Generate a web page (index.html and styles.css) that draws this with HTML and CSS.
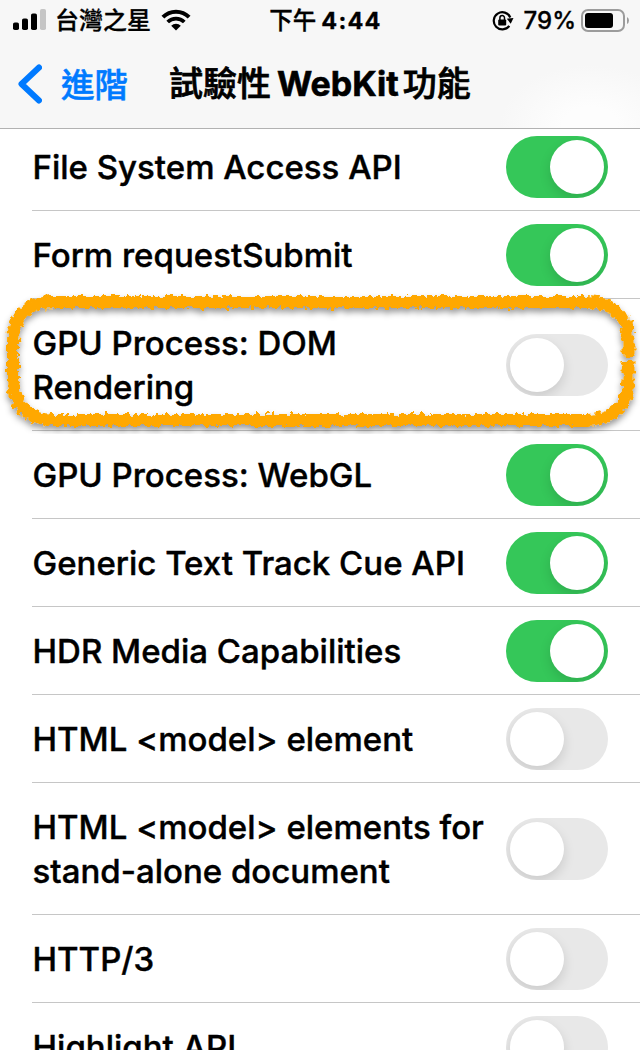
FILE: index.html
```html
<!DOCTYPE html>
<html lang="zh-Hant">
<head>
    <meta charset="UTF-8">
    <meta name="viewport" content="width=device-width, initial-scale=1.0">
    <title>試驗性 WebKit 功能</title>
    <link rel="stylesheet" href="styles.css">
</head>
<body>
    <header class="header">
        <div class="status-bar">
            <div class="status-left">
                <svg class="signal" width="34" height="22" viewBox="0 0 34 22">
                    <rect x="0" y="13.5" width="6" height="7.5" rx="1.8"/>
                    <rect x="9" y="9.5" width="6" height="11.5" rx="1.8"/>
                    <rect x="18" y="4.5" width="6" height="16.5" rx="1.8"/>
                    <rect x="27" y="0" width="6" height="21" rx="1.8" fill="#c5c5c5"/>
                </svg>
                <span class="carrier">台灣之星</span>
                <svg class="wifi" width="30" height="22" viewBox="0 0 30 22">
                    <path d="M1.9 8.2 A18.5 18.5 0 0 1 28.1 8.2" fill="none" stroke="#000" stroke-width="4"/>
                    <path d="M6.7 13 A11.7 11.7 0 0 1 23.3 13" fill="none" stroke="#000" stroke-width="3.7"/>
                    <path d="M15 21.5 L10.2 16.7 A6.9 6.9 0 0 1 19.8 16.7 Z"/>
                </svg>
            </div>
            <div class="time"><span class="ampm">下午</span><b>4:44</b></div>
            <div class="status-right">
                <svg class="lock" width="22" height="22" viewBox="0 0 22 22">
                    <path d="M17.3 15.9 A8.6 8.6 0 1 1 18.3 7.5" fill="none" stroke="#000" stroke-width="2.2"/>
                    <path d="M14.8 8.7 L21.5 7.9 L18.7 13.7 Z"/>
                    <rect x="6.2" y="9.6" width="8" height="5.9" rx="1"/>
                    <path d="M7.9 10 V7.9 A2.3 2.3 0 0 1 12.5 7.9 V10" fill="none" stroke="#000" stroke-width="1.5"/>
                </svg>
                <span class="percent">79%</span>
                <svg class="battery" width="49" height="24" viewBox="0 0 49 24">
                    <rect x="1" y="1" width="42" height="21" rx="6" fill="none" stroke="#9c9c9c" stroke-width="2"/>
                    <rect x="4" y="4" width="28" height="15" rx="3"/>
                    <path d="M46 8 Q48 9.2 48 11.5 Q48 13.8 46 15 Z" fill="#9c9c9c"/>
                </svg>
            </div>
        </div>
        <div class="nav-bar">
            <a class="back">
                <svg width="24" height="40" viewBox="0 0 24 40">
                    <path d="M21 3.5 L3.5 20 L21 36.5" fill="none" stroke="#007aff" stroke-width="6" stroke-linecap="round" stroke-linejoin="round"/>
                </svg>
                <span>進階</span>
            </a>
            <h1>試驗性<span class="latin">WebKit</span>功能</h1>
        </div>
    </header>

    <main class="list">
        <div class="row"><span class="label">File System Access API</span><span class="switch on"></span></div>
        <div class="row"><span class="label">Form requestSubmit</span><span class="switch on"></span></div>
        <div class="row marked">
            <span class="label">GPU Process: DOM<br>Rendering</span><span class="switch"></span>
            <!-- crayon outline -->
            <svg class="marker" width="640" height="150" viewBox="0 0 640 150">
                <defs>
                    <filter id="crayon" x="0" y="0" width="640" height="150" filterUnits="userSpaceOnUse">
                        <feTurbulence type="fractalNoise" baseFrequency="0.2" numOctaves="2" seed="7" result="noise"/>
                        <feDisplacementMap in="SourceGraphic" in2="noise" scale="9" xChannelSelector="R" yChannelSelector="G" result="rough"/>
                        <feDropShadow in="rough" dx="0" dy="4" stdDeviation="3" flood-color="#000" flood-opacity="0.4"/>
                    </filter>
                </defs>
                <path filter="url(#crayon)" d="M628.5 73 V55 Q626 19 588 18 H52 Q14 19 13 57 V95 Q14 134 52 136 H588 Q626 134 628.5 97 V77" fill="none" stroke="#ffa800" stroke-width="12"/>
            </svg>
        </div>
        <div class="row"><span class="label">GPU Process: WebGL</span><span class="switch on"></span></div>
        <div class="row"><span class="label">Generic Text Track Cue API</span><span class="switch on"></span></div>
        <div class="row"><span class="label">HDR Media Capabilities</span><span class="switch on"></span></div>
        <div class="row"><span class="label">HTML &lt;model&gt; element</span><span class="switch"></span></div>
        <div class="row"><span class="label">HTML &lt;model&gt; elements for<br>stand-alone document</span><span class="switch"></span></div>
        <div class="row"><span class="label">HTTP/3</span><span class="switch"></span></div>
        <div class="row"><span class="label">Highlight API</span><span class="switch"></span></div>
    </main>
</body>
</html>
```
FILE: styles.css
```css
* {
    box-sizing: border-box;
}
body {
    margin: 0;
    height: 1050px;
    overflow: hidden;
    background: #fff;
    color: #000;
    font-family: Inter, "Noto Sans CJK TC", sans-serif;
}
.header {
    position: relative;
    z-index: 2;
    height: 129px;
    border-bottom: 1px solid #b2b2b2;
    background: radial-gradient(ellipse 90px 60px at 590px 125px, #fdfdfd 30%, #f7f7f7 100%);
}
.status-bar {
    display: grid;
    grid-template-columns: 1fr auto 1fr;
    align-items: center;
    height: 40px;
    padding: 0 11px 0 13px;
    font-size: 24px;
    line-height: 40px;
}
.status-left,
.status-right,
.time {
    display: flex;
    align-items: center;
}
.status-right {
    justify-content: flex-end;
}
.signal,
.wifi {
    margin-top: -1px;
}
.carrier {
    margin: 1px 10px 0 8px;
    font-weight: 500;
    -webkit-text-stroke: 0.3px #000;
}
.time {
    gap: 5px;
    margin-left: 9px;
    font-size: 23.5px;
}
.ampm {
    font-weight: 500;
    -webkit-text-stroke: 0.3px #000;
}
.time b {
    font-weight: 700;
    letter-spacing: 1.2px;
    -webkit-text-stroke: 0.3px #000;
}
.lock {
    margin-right: 10px;
}
.percent {
    margin-right: 5px;
    font-size: 24px;
    font-weight: 500;
    -webkit-text-stroke: 0.3px #000;
}
.battery {
    margin-right: -1px;
}
.nav-bar {
    display: flex;
    align-items: center;
    height: 88px;
    padding-left: 18px;
}
.back {
    display: flex;
    align-items: center;
    gap: 19px;
    width: 151px;
    color: #007aff;
    font-size: 33.5px;
    font-weight: 500;
    -webkit-text-stroke: 0.5px #007aff;
}
.back span {
    margin-top: -4px;
}
h1 {
    margin: -5px 0 0;
    font-size: 34px;
    font-weight: 500;
    white-space: nowrap;
    -webkit-text-stroke: 0.7px #000;
}
.latin {
    margin: 0 4px 0 6px;
    font-weight: 700;
    -webkit-text-stroke: 0.6px #000;
}
.list {
    margin-top: -6px;
}
.row {
    position: relative;
    display: flex;
    align-items: center;
    justify-content: space-between;
    margin-left: 32px;
    padding: 13px 32px 12px 0;
    border-bottom: 1px solid #c6c6c6;
}
.label {
    padding: 9px 0 9px 0.5px;
    font-size: 33px;
    font-weight: 500;
    line-height: 44px;
    white-space: nowrap;
    -webkit-text-stroke: 0.4px #000;
}
.switch {
    flex: none;
    width: 102px;
    height: 62px;
    padding: 4px;
    border-radius: 31px;
    overflow: hidden;
    background: #e8e8e8;
}
.switch::before {
    content: "";
    display: block;
    width: 54px;
    height: 54px;
    border-radius: 50%;
    background: #fff;
    box-shadow: 0 5px 12px rgba(0, 0, 0, 0.13);
}
.switch.on {
    background: #35c759;
}
.switch.on::before {
    margin-left: auto;
}
.marked {
    z-index: 1;
}
.marker {
    position: absolute;
    left: -32px;
    top: -15px;
}
```
